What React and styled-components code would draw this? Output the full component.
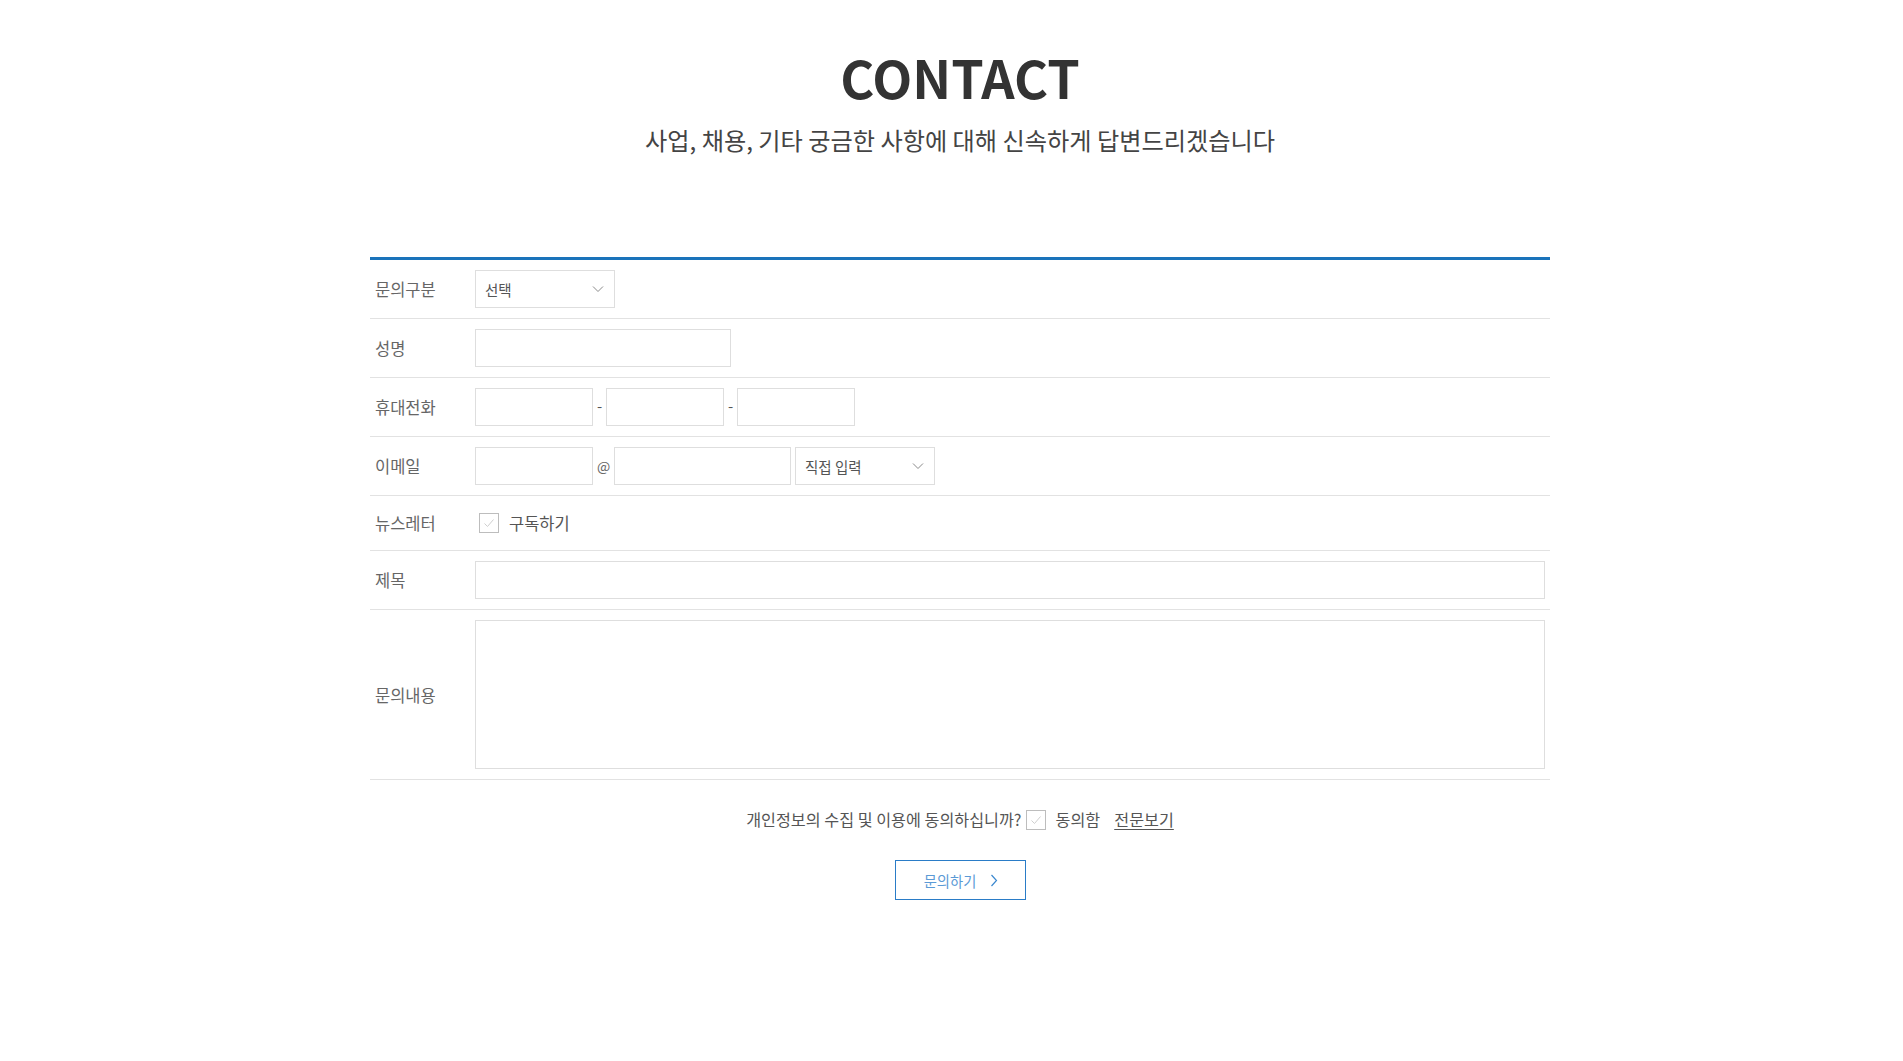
import React from "react";
import styled, { createGlobalStyle } from "styled-components";

const GlobalStyle = createGlobalStyle`
    body {
        margin: 0;
        background: #FFFFFF;
        font-family: "Noto Sans CJK KR", "Noto Sans", sans-serif;
        color: #333333;
    }
    * {
        box-sizing: border-box;
    }
`

function Chevron () {
    return (
        <svg width="12" height="8" viewBox="0 0 12 8">
            <path d="M1 1.5 L6 6.5 L11 1.5" fill="none" stroke="#8a8a8a" strokeWidth="1" />
        </svg>
    )
}

function CheckBox () {
    return (
        <Box>
            <svg width="12" height="10" viewBox="0 0 12 10">
                <path d="M1.5 5.5 L4.5 8.5 L10.5 1.5" fill="none" stroke="#cfcfcf" strokeWidth="1" />
            </svg>
        </Box>
    )
}

function SelectBox (props) {
    return (
        <Select width={props.width}>
            <span>{props.text}</span>
            <Chevron />
        </Select>
    )
}

export default function App () {
    return (
        <>
            <GlobalStyle />
            <Page>
                <Header>
                    <Title>CONTACT</Title>
                    <SubTitle>사업, 채용, 기타 궁금한 사항에 대해 신속하게 답변드리겠습니다</SubTitle>
                </Header>

                <Table>
                    <Row>
                        <Label>문의구분</Label>
                        <Field>
                            <SelectBox text="선택" width={140} />
                        </Field>
                    </Row>
                    <Row>
                        <Label>성명</Label>
                        <Field>
                            <Input width={256} />
                        </Field>
                    </Row>
                    <Row>
                        <Label>휴대전화</Label>
                        <Field>
                            <Input width={118} />
                            <Sep>-</Sep>
                            <Input width={118} />
                            <Sep>-</Sep>
                            <Input width={118} />
                        </Field>
                    </Row>
                    <Row>
                        <Label>이메일</Label>
                        <Field>
                            <Input width={118} />
                            <At>@</At>
                            <Input width={177} />
                            <Spacer />
                            <SelectBox text="직접 입력" width={140} />
                        </Field>
                    </Row>
                    <Row short>
                        <Label>뉴스레터</Label>
                        <Field>
                            <CheckLabel>
                                <CheckBox />
                                구독하기
                            </CheckLabel>
                        </Field>
                    </Row>
                    <Row>
                        <Label>제목</Label>
                        <Field>
                            <Input full />
                        </Field>
                    </Row>
                    <Row>
                        <Label>문의내용</Label>
                        <Field>
                            <TextArea />
                        </Field>
                    </Row>
                </Table>

                <Agree>
                    개인정보의 수집 및 이용에 동의하십니까?
                    <CheckBox />
                    <span>동의함</span>
                    <FullText>전문보기</FullText>
                </Agree>

                <ButtonWrap>
                    <Submit>
                        문의하기
                        <svg width="8" height="13" viewBox="0 0 8 13">
                            <path d="M1.5 1 L6.5 6.5 L1.5 12" fill="none" stroke="#3b88cf" strokeWidth="1.2" />
                        </svg>
                    </Submit>
                </ButtonWrap>
            </Page>
        </>
    )
}

const Page = styled.div`
    padding-left: 17px;
    padding-bottom: 160px;
`

const Header = styled.div`
    padding-top: 45.5px;
    text-align: center;
`

const Title = styled.h1`
    margin: 0;
    font-family: "Noto Sans CJK KR", "Open Sans", sans-serif;
    font-weight: 700;
    font-size: 52px;
    line-height: 61px;
    color: #333333;
`

const SubTitle = styled.p`
    margin: 17px 0 0;
    font-size: 24.2px;
    line-height: 32px;
    font-weight: 400;
    color: #444444;
`

const Table = styled.div`
    width: 1180px;
    margin: 101.5px auto 0;
    border-top: 3px solid #1a73ba;
`

const Row = styled.div`
    display: grid;
    grid-template-columns: 105px 1fr;
    align-items: center;
    padding: ${props => props.short ? "16px 5px 16px 0" : "10px 5px 10px 0"};
    border-bottom: 1px solid #e2e2e2;
`

const Label = styled.div`
    padding-left: 5px;
    font-size: 16.5px;
    color: #666666;
    line-height: 22px;
`

const Field = styled.div`
    display: flex;
    align-items: center;
`

const Input = styled.input`
    width: ${props => props.full ? "100%" : props.width + "px"};
    height: 38px;
    margin: 0;
    padding: 0 10px;
    border: 1px solid #dedede;
    background: #FFFFFF;
    outline: none;
`

const TextArea = styled.textarea`
    display: block;
    width: 100%;
    height: 149px;
    margin: 0;
    border: 1px solid #dedede;
    resize: none;
    outline: none;
`

const Sep = styled.span`
    margin: 0 4px 2px;
    font-size: 15px;
    line-height: 20px;
    color: #555555;
    width: 5px;
    text-align: center;
`

const At = styled.span`
    margin: 0 5px 0 4px;
    font-size: 14px;
    color: #666666;
    width: 12px;
    text-align: center;
`

const Spacer = styled.span`
    width: 4px;
`

const Select = styled.div`
    width: ${props => props.width}px;
    height: 38px;
    border: 1px solid #dedede;
    display: flex;
    align-items: center;
    justify-content: space-between;
    padding: 0 10px 0 9px;
    font-size: 14.5px;
    color: #555555;
`

const Box = styled.span`
    display: inline-flex;
    align-items: center;
    justify-content: center;
    width: 20px;
    height: 20px;
    border: 1px solid #bdbdbd;
    background: #FFFFFF;
`

const CheckLabel = styled.label`
    display: flex;
    align-items: center;
    gap: 10px;
    padding-left: 4px;
    font-size: 16.5px;
    line-height: 22px;
    color: #555555;
`

const Agree = styled.div`
    margin-top: 28px;
    display: flex;
    align-items: center;
    justify-content: center;
    font-size: 16.2px;
    line-height: 22px;
    color: #555555;

    ${Box} {
        margin: 2px 10px 0 4px;
    }
`

const FullText = styled.a`
    margin-left: 14px;
    color: #555555;
    text-decoration: underline;
    text-underline-offset: 3px;
`

const ButtonWrap = styled.div`
    margin-top: 30px;
    display: flex;
    justify-content: center;
`

const Submit = styled.button`
    width: 131px;
    height: 40px;
    display: flex;
    align-items: center;
    justify-content: center;
    gap: 14px;
    background: #FFFFFF;
    border: 1px solid #2a7cc7;
    font-family: "Noto Sans CJK KR", sans-serif;
    font-size: 14.3px;
    color: #5b9ad6;
    padding: 0 0 0 2px;
    cursor: pointer;
`
